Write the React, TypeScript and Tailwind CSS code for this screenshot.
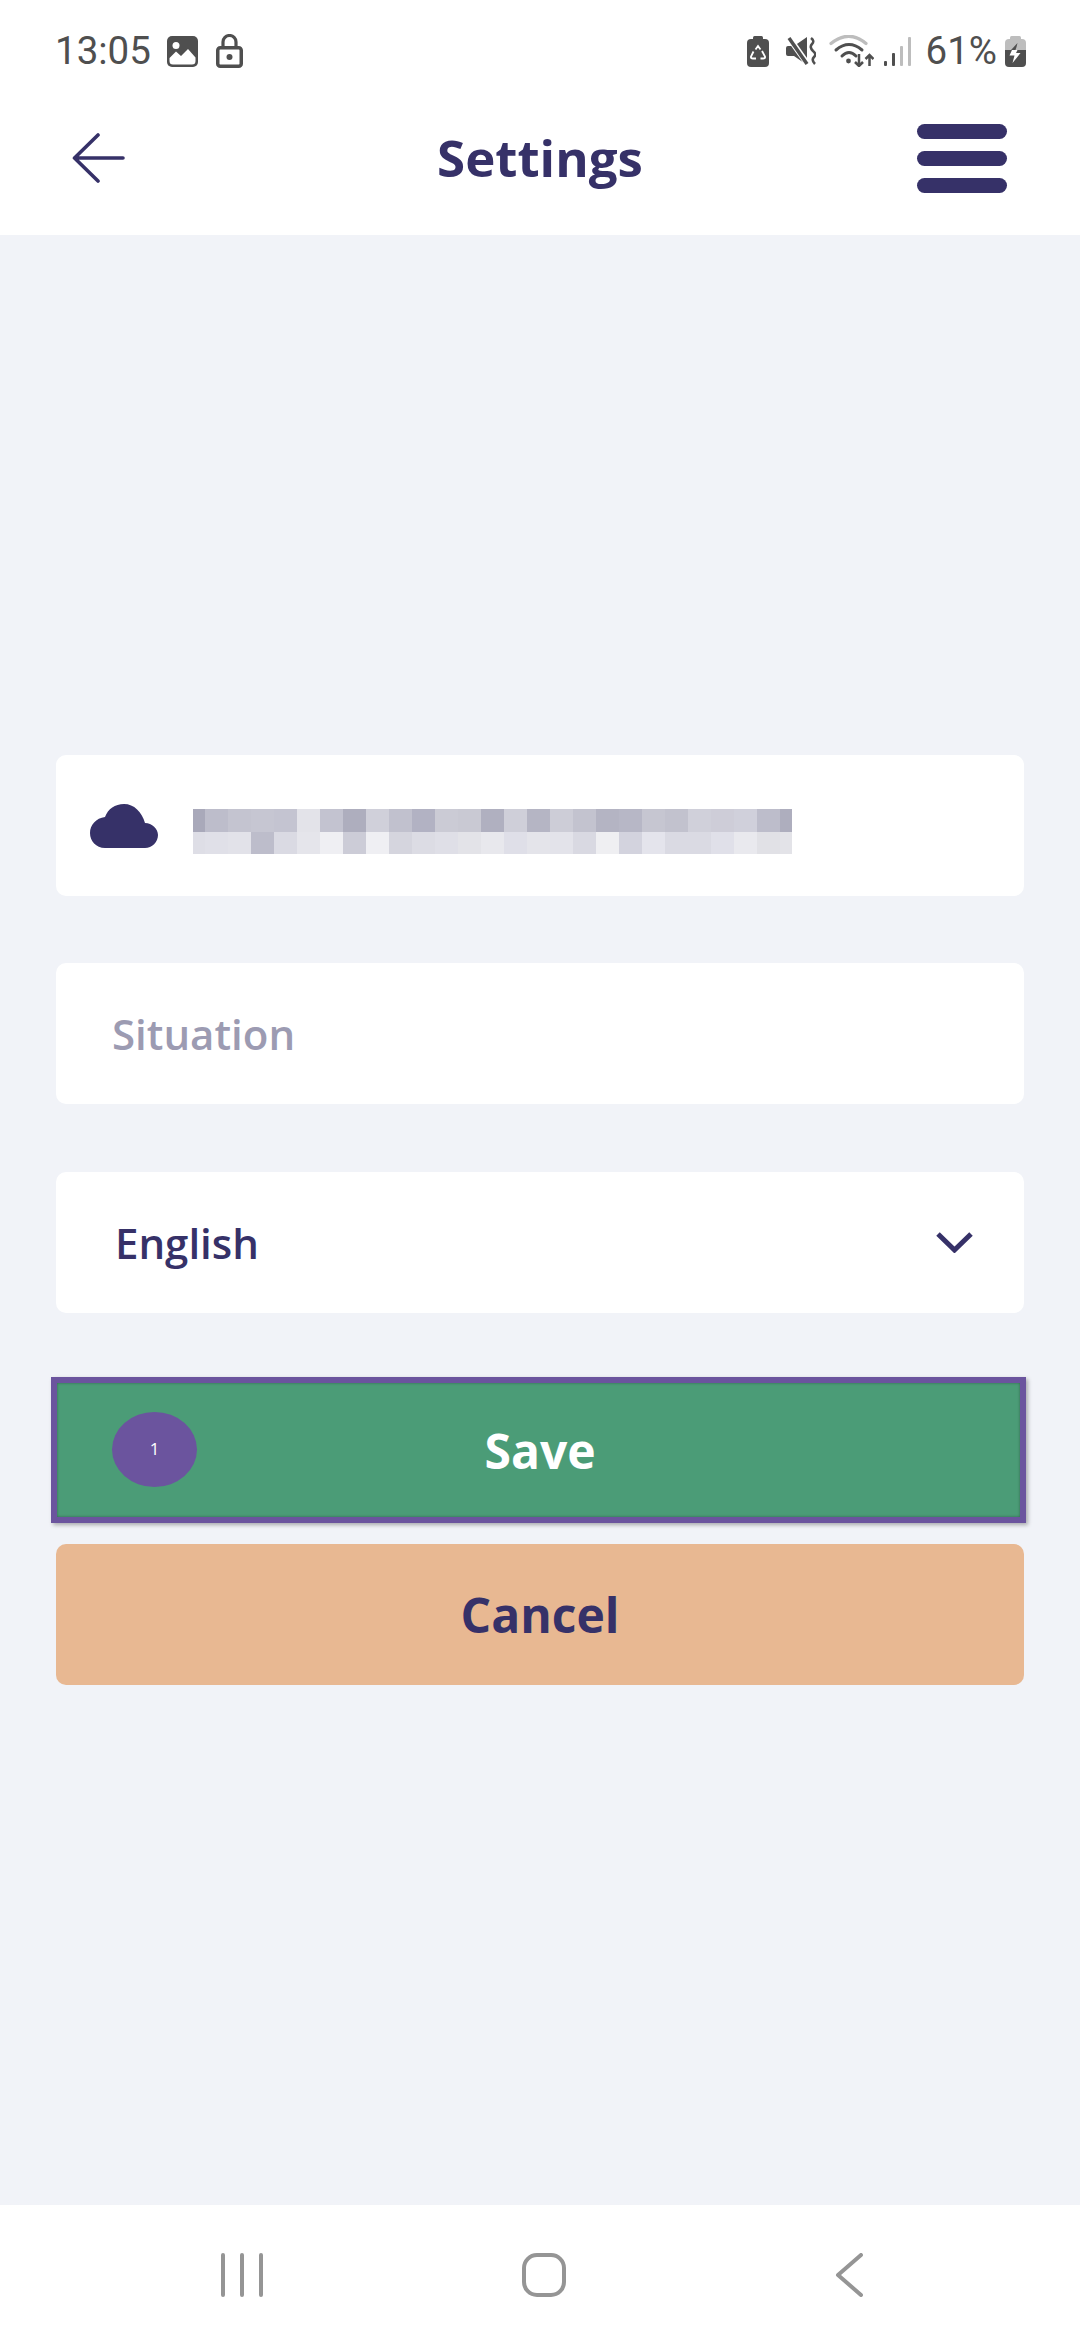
const row1 = [
  "bg-[#a9a9ba]", "bg-[#bdbdcb]", "bg-[#c4c4d0]", "bg-[#c6c6d2]", "bg-[#c4c4d1]", "bg-[#e3e3e9]", "bg-[#c3c3d0]",
  "bg-[#aeaebe]", "bg-[#d0d0da]", "bg-[#c1c1ce]", "bg-[#b2b2c3]", "bg-[#cbcbd5]", "bg-[#c9c9d3]", "bg-[#b0b0c0]",
  "bg-[#cfcfd9]", "bg-[#b5b5c4]", "bg-[#cdcdd7]", "bg-[#c3c3cf]", "bg-[#b4b4c3]", "bg-[#b7b7c6]", "bg-[#c6c6d1]",
  "bg-[#c2c2ce]", "bg-[#d0d0da]", "bg-[#cecdd8]", "bg-[#d0d0db]", "bg-[#bdbdcb]", "bg-[#aeaebe]",
];
const row2 = [
  "bg-[#dedee6]", "bg-[#e0e0e8]", "bg-[#e2e2e9]", "bg-[#bdbdcb]", "bg-[#dadae3]", "bg-[#e5e5eb]", "bg-[#efeff3]",
  "bg-[#ccccd7]", "bg-[#efeff3]", "bg-[#d5d5de]", "bg-[#dcdce4]", "bg-[#dfdfe7]", "bg-[#e3e3e8]", "bg-[#e8e8ed]",
  "bg-[#dfdfe8]", "bg-[#e4e4ea]", "bg-[#e3e3ea]", "bg-[#d9d9e2]", "bg-[#efeff2]", "bg-[#d3d3de]", "bg-[#e4e4ec]",
  "bg-[#dadae3]", "bg-[#dadae3]", "bg-[#e0e0e9]", "bg-[#e9e9ee]", "bg-[#e1e1e6]", "bg-[#e3e3e8]",
];

function PixelRow({ colors, height }: { colors: string[]; height: string }) {
  return (
    <div className={`flex ${height}`}>
      {colors.map((c, i) => (
        <div key={i} className={`${c} ${i === 0 || i === colors.length - 1 ? "w-[12px]" : "w-[23px]"}`} />
      ))}
    </div>
  );
}

const DARK = "#4f4f4f";
const GREY = "#bdbdbd";

function StatusLeft() {
  return (
    <div className="flex items-center">
      <span className="font-['Roboto',sans-serif] text-[38.5px] leading-none text-[#4f4f4f]">13:05</span>
      <svg width="31" height="31" viewBox="0 0 31 31" className="ml-[16px]">
        <rect width="31" height="31" rx="5" fill={DARK} />
        <circle cx="9" cy="9.5" r="3.5" fill="#fff" />
        <path d="M2.5 22 L9 15.5 L14 20 L21 13 L28.5 21.5 V25 Q28.5 28.5 25 28.5 H6 Q2.5 28.5 2.5 25 Z" fill="#fff" />
      </svg>
      <svg width="27" height="34" viewBox="0 0 27 34" className="ml-[18px]">
        <rect x="1.75" y="13.75" width="23.5" height="18.5" rx="2.5" fill="none" stroke={DARK} strokeWidth="3.5" />
        <path d="M7 13 V8 a6.5 6.5 0 0 1 13 0 V13" fill="none" stroke={DARK} strokeWidth="3.2" />
        <circle cx="13.5" cy="23" r="3" fill={DARK} />
      </svg>
    </div>
  );
}

function StatusRight() {
  return (
    <div className="flex items-center">
      <svg width="22" height="31" viewBox="0 0 22 31">
        <rect x="6" y="0" width="10" height="5" rx="1.5" fill={DARK} />
        <rect x="0" y="3" width="22" height="28" rx="4" fill={DARK} />
        <path d="M8.5 13.5 L11 10 L13.5 13.5 M15 15 L18 20.5 Q18.5 22.5 16 22.5 H13.5 M9 22.5 H6 Q3.5 22.5 4 20.5 L6.5 15.5" fill="none" stroke="#fff" strokeWidth="1.8" />
      </svg>
      <svg width="30" height="28" viewBox="0 0 30 28" className="ml-[17px]">
        <path d="M0 11 Q0 9 2 9 L8 9 L21 0 L21 28 L8 19 L2 19 Q0 19 0 17 Z" fill={DARK} />
        <path d="M1 -2 L23 29" stroke="#fff" strokeWidth="6" />
        <path d="M3 1 L21 27" stroke={DARK} strokeWidth="3.5" />
        <path d="M25 1 q4 3 1 6 q-3 3 1 7 q4 3 1 6 q-3 3 1 7" fill="none" stroke={DARK} strokeWidth="2.5" />
      </svg>
      <svg width="45" height="32" viewBox="0 0 45 32" className="ml-[13px]">
        <path d="M2 8.5 Q20 -6 37 8.5" fill="none" stroke={GREY} strokeWidth="3.2" strokeLinecap="round" />
        <path d="M7 15 Q20 4 33 15" fill="none" stroke={DARK} strokeWidth="3" strokeLinecap="round" />
        <path d="M13 21 Q20 14 27 21" fill="none" stroke={DARK} strokeWidth="3" strokeLinecap="round" />
        <circle cx="19.5" cy="26" r="2.4" fill={DARK} />
        <path d="M30 19 V31 M26 27 L30 31 L34 27" fill="none" stroke={DARK} strokeWidth="2.5" />
        <path d="M40.5 31 V20 M36.5 24 L40.5 20 L44.5 24" fill="none" stroke={DARK} strokeWidth="2.5" />
      </svg>
      <svg width="27" height="29" viewBox="0 0 27 29" className="ml-[10px]">
        <rect x="0" y="24" width="3" height="5" rx="1" fill={DARK} />
        <rect x="8" y="16" width="3" height="13" rx="1" fill={DARK} />
        <rect x="16" y="9" width="3" height="20" rx="1" fill={GREY} />
        <rect x="24" y="0" width="3" height="29" rx="1" fill={GREY} />
      </svg>
      <span className="ml-[15px] font-['Roboto',sans-serif] text-[38.5px] leading-none text-[#4f4f4f]">61%</span>
      <svg width="21" height="31" viewBox="0 0 21 31" className="ml-[8px]">
        <rect x="5" y="0" width="11" height="5" rx="1.5" fill={GREY} />
        <path d="M0 14 V7 Q0 3 4 3 H17 Q21 3 21 7 V14 Z" fill={GREY} />
        <path d="M0 14 H21 V27 Q21 31 17 31 H4 Q0 31 0 27 Z" fill={DARK} />
        <path d="M12.5 7 L6 14 H10.5 L11.5 11 Z" fill={DARK} />
        <path d="M7 14 L4.5 19.5 H9.5 L7.5 27 L15.5 17 H11 L12.5 14 Z" fill="#fff" />
      </svg>
    </div>
  );
}

function Card({ children, className = "" }: { children: React.ReactNode; className?: string }) {
  return <div className={`flex h-[141px] items-center rounded-[10px] bg-white ${className}`}>{children}</div>;
}

export default function App() {
  return (
    <div className="flex h-[2340px] w-[1080px] flex-col overflow-hidden bg-[#f1f3f8] font-['Open_Sans',sans-serif]">
      <div className="bg-white">
        <div className="flex h-[81px] items-center justify-between pl-[55px] pr-[54px] pt-[21px]">
          <StatusLeft />
          <StatusRight />
        </div>
        <div className="grid h-[154px] grid-cols-3 items-center pl-[71px] pr-[71px]">
          <svg width="55" height="50" viewBox="0 0 55 50" className="justify-self-start">
            <path d="M27 2 L3.5 25 L27 48 M3.5 25 H52" fill="none" stroke="#363168" strokeWidth="3.6" strokeLinecap="round" strokeLinejoin="round" />
          </svg>
          <h1 className="justify-self-center whitespace-nowrap pb-[2px] text-[51px] font-bold leading-none text-[#363168]">Settings</h1>
          <div className="mr-[2px] flex w-[90px] flex-col gap-[12px] justify-self-end">
            <div className="h-[15px] rounded-full bg-[#363168]" />
            <div className="h-[15px] rounded-full bg-[#363168]" />
            <div className="h-[15px] rounded-full bg-[#363168]" />
          </div>
        </div>
      </div>

      <main className="flex flex-1 flex-col px-[56px] pt-[520px]">
        <Card className="pl-[34px]">
          <svg width="68" height="44" viewBox="0 0 68 44">
            <path d="M15 44 C6 44 0 37 0 29 C0 21 6 14 15 13 C18 5 25 0 34 0 C44 0 52 8 55 19 C62 19 68 25 68 31 C68 38 62 44 55 44 Z" fill="#363168" />
          </svg>
          <div className="ml-[35px] mt-[12px] flex flex-col">
            <PixelRow colors={row1} height="h-[23px]" />
            <PixelRow colors={row2} height="h-[22px]" />
          </div>
        </Card>

        <Card className="mt-[67px] pl-[56px]">
          <span className="text-[42px] font-semibold leading-none text-[#9c9bb2]">Situation</span>
        </Card>

        <Card className="mt-[68px] justify-between pl-[59px] pr-[51px]">
          <span className="text-[42px] font-semibold leading-none text-[#363168]">English</span>
          <svg width="37" height="21" viewBox="0 0 37 21">
            <path d="M2 2 L18.5 18 L35 2" fill="none" stroke="#363168" strokeWidth="5" />
          </svg>
        </Card>

        <button className="relative -ml-[5px] -mr-[2px] mt-[64px] flex h-[146px] items-center justify-center border-[6px] border-[#6b549e] bg-[#4b9c77] pl-[3px] pt-[2px] text-[48px] font-bold text-white shadow-[2px_2px_4px_rgba(0,0,0,0.3),inset_0_0_3px_rgba(0,0,0,0.35)]">
          Save
          <span className="absolute left-[55px] top-[29px] flex h-[75px] w-[85px] items-center justify-center rounded-[50%] bg-[#6b549e] pb-[2px] text-[17px] font-normal text-white">
            1
          </span>
        </button>

        <button className="mt-[21px] flex h-[141px] items-center justify-center rounded-[10px] bg-[#e8b892] text-[48px] font-bold text-[#363168]">
          Cancel
        </button>
      </main>

      <nav className="flex h-[135px] items-center justify-between bg-white pl-[220px] pr-[217px] pt-[4px]">
        <svg width="44" height="44" viewBox="0 0 44 44">
          <path d="M3 2 V42 M22 2 V42 M41 2 V42" fill="none" stroke="#959595" strokeWidth="4" strokeLinecap="round" />
        </svg>
        <svg width="44" height="44" viewBox="0 0 44 44" className="-ml-[12px]">
          <rect x="2" y="2" width="40" height="40" rx="13" fill="none" stroke="#959595" strokeWidth="4" />
        </svg>
        <svg width="28" height="44" viewBox="0 0 28 44">
          <path d="M26 2 L3 22 L26 42" fill="none" stroke="#959595" strokeWidth="4" strokeLinecap="round" strokeLinejoin="round" />
        </svg>
      </nav>
    </div>
  );
}
